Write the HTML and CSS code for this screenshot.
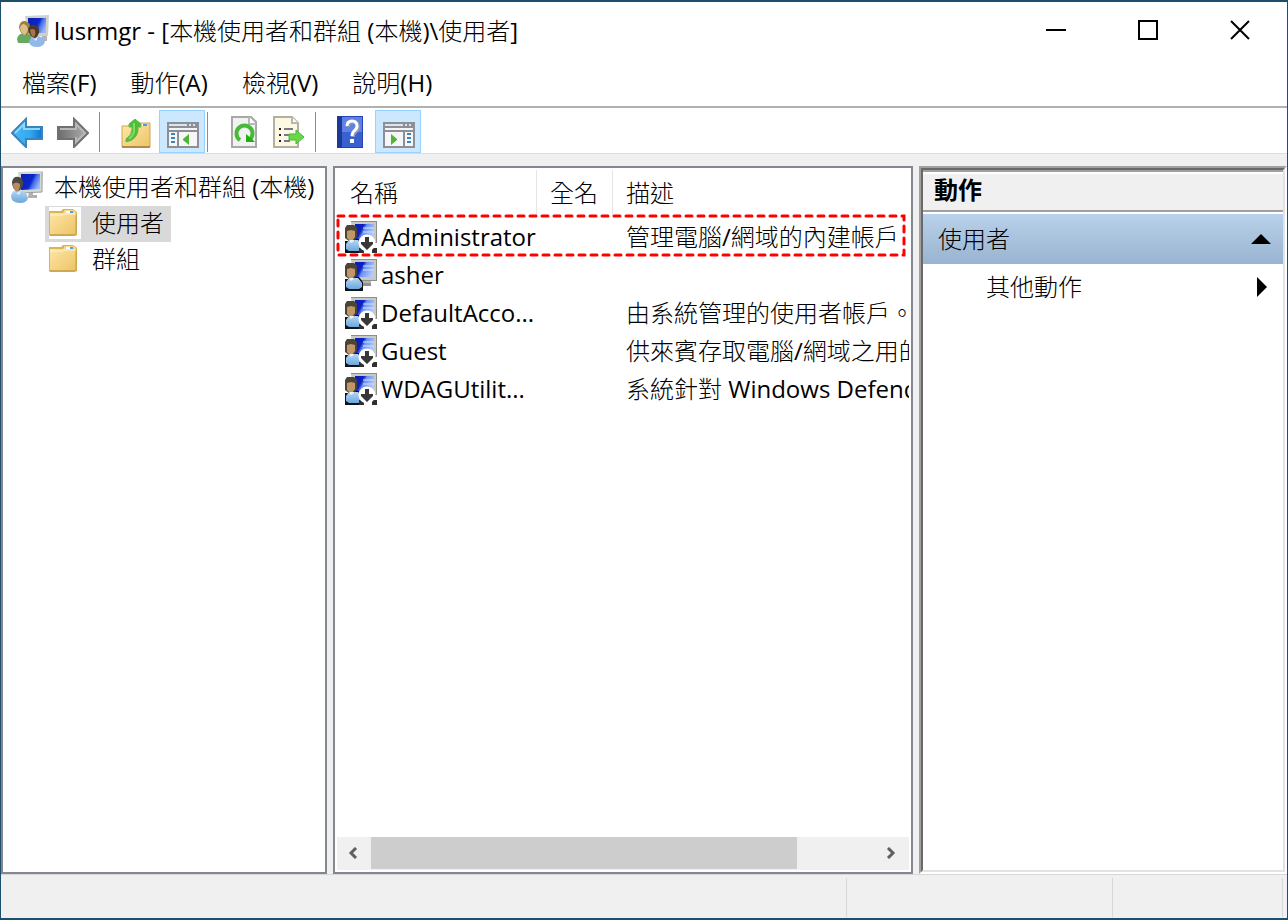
FILE: index.html
```html
<!DOCTYPE html>
<html lang="zh-Hant">
<head>
    <meta charset="UTF-8">
    <title>lusrmgr</title>
    <link rel="stylesheet" href="styles.css">
</head>
<body>
<!-- icons -->
<svg class="defs" aria-hidden="true">
    <defs>
        <linearGradient id="g-screen" x1="0" y1="0.2" x2="1" y2="0.6">
            <stop offset="0" stop-color="#0a1fb4"/>
            <stop offset="0.35" stop-color="#0c22c4"/>
            <stop offset="0.5" stop-color="#6c92f4"/>
            <stop offset="1" stop-color="#b4ccfc"/>
        </linearGradient>
        <linearGradient id="g-screen-dark" x1="0" y1="0.2" x2="1" y2="0.6">
            <stop offset="0" stop-color="#0a1fb4"/>
            <stop offset="0.55" stop-color="#0c28cc"/>
            <stop offset="0.7" stop-color="#4870e8"/>
            <stop offset="1" stop-color="#9cb8f8"/>
        </linearGradient>
        <linearGradient id="g-body" x1="0" y1="0" x2="0" y2="1">
            <stop offset="0" stop-color="#b4d8f6"/>
            <stop offset="1" stop-color="#6ca6dc"/>
        </linearGradient>
        <linearGradient id="g-folder" x1="0" y1="0" x2="1" y2="1">
            <stop offset="0" stop-color="#ffe8a8"/>
            <stop offset="1" stop-color="#ecc468"/>
        </linearGradient>
        <linearGradient id="g-blue" x1="0" y1="0" x2="1" y2="0">
            <stop offset="0" stop-color="#48b8f8"/>
            <stop offset="0.6" stop-color="#34a8f0"/>
            <stop offset="1" stop-color="#1474cc"/>
        </linearGradient>
        <linearGradient id="g-gray" x1="0" y1="0" x2="1" y2="0">
            <stop offset="0" stop-color="#6c6c6c"/>
            <stop offset="1" stop-color="#b0b0b0"/>
        </linearGradient>
    </defs>
    <symbol id="i-user" viewBox="0 0 32 32">
        <path d="M18 22h8v3h-8z" fill="#b4b4b4"/>
        <path d="M18 24h8v3h-8z" fill="#909090"/>
        <path d="M6 0h26v22H8z" fill="#c8c9c2"/>
        <path d="M6 0h26v1H6zM31 0h1v22h-1zM10 21h22v1H10z" fill="#8c8e88"/>
        <path d="M10 3h19v15H10z" fill="url(#g-screen)"/>
        <path d="M18 7h11M18 11h11" stroke="#d4e2ff"/>
        <path d="M0 20h4v-2h10l4 5v9H0z" fill="#101418"/>
        <path d="M1 23l3-4h9l4 5v4l-3 2H4l-3-2z" fill="url(#g-body)"/>
        <path d="M0 7l2-3h7l3 3v9l-3 4H4l-4-3z" fill="#4c4438"/>
        <path d="M2 10l4-1 4 1v6l-3 4h-2l-3-3z" fill="#c09868"/>
        <path d="M4 19l2 3 4-3z" fill="#f0f4f8"/>
    </symbol>
    <symbol id="i-disabled" viewBox="0 0 32 32">
        <use href="#i-user"/>
        <path d="M27 27h5v5h-5zM14 27h5v5h-5z" fill="#303030"/>
        <circle cx="22" cy="22" r="8.5" fill="#fff"/>
        <path d="M20 16h4v5h4v2l-6 6-6-6v-2h4z" fill="#383838"/>
    </symbol>
    <symbol id="i-root" viewBox="0 0 32 32">
        <path d="M18 20h4v4h4v3h-9z" fill="#b0b0b0"/>
        <path d="M7 1l25-1-1 21-22 1z" fill="#d4d6d2"/>
        <path d="M31 1v20l-20 1" fill="none" stroke="#9ca09c"/>
        <path d="M10 3h19v15l-19 1z" fill="url(#g-screen-dark)"/>
        <path d="M0 25q1-6 7-6 8 0 10 8-1 5-8 5-9 0-9-7z" fill="url(#g-body)"/>
        <path d="M1 11q1-6 7-5 5 1 4 8-2 6-6 6-5-2-5-9z" fill="#4c4844"/>
        <path d="M2 13q3-3 7 0 0 6-3 8-4-2-4-8z" fill="#b88c60"/>
        <path d="M3 20l3 2 4-2-2 4z" fill="#e4f0fa"/>
    </symbol>
    <symbol id="i-app" viewBox="0 0 32 32">
        <path d="M8 1l24-1-1 21-20 1z" fill="#d0d2ca"/>
        <path d="M11 3h18v15H11z" fill="url(#g-screen-dark)"/>
        <path d="M25 21h5v5h-5z" fill="#b4b4b4"/>
        <path d="M0 24q1-6 8-6 7 1 7 6l-1 4H1z" fill="#68a860"/>
        <path d="M2 12q1-7 6-6 6 1 5 8-1 6-5 6-5-1-6-8z" fill="#a08040"/>
        <path d="M3 13q1-4 4-4 4 2 4 6-2 5-4 5-3-2-4-7z" fill="#dcc08c"/>
        <path d="M12 27q1-6 8-6 7 1 8 6-2 5-8 5-7 0-8-5z" fill="#90b8e8"/>
        <path d="M11 14q2-5 7-4 5 2 4 8-2 5-5 5-5-2-6-9z" fill="#4c3828"/>
        <path d="M13 15q2-2 5 0 1 5-1 7-3 0-4-7z" fill="#a8744c"/>
        <path d="M15 22l3 2 3-2-2 4z" fill="#eef4fa"/>
    </symbol>
    <symbol id="i-folder" viewBox="0 0 32 32">
        <path d="M0 0h32v32H0z" fill="#fff"/>
        <path d="M0 4h12l2-2h10l4 3v23l-2 1H1l-1-1z" fill="#dcb458"/>
        <path d="M1 6h13l2-3h8l3 2v22H1z" fill="url(#g-folder)"/>
        <path d="M17 4h5v2h-5z" fill="#fff"/>
        <path d="M21 4h3v2h-3z" fill="#5c9ce0"/>
        <path d="M1 8h13l2-1h10" fill="none" stroke="#fff4d0"/>
        <path d="M1 28h25M27 8v20" stroke="#c49c48"/>
    </symbol>
    <symbol id="i-back" viewBox="0 0 32 32">
        <path d="M1 17L15 3v8h16v12H15v8z" fill="url(#g-blue)" stroke="#3c84b8" stroke-width="2"/>
        <path d="M4 17l9-9v5h16" fill="none" stroke="#8cd8fc" stroke-width="2"/>
    </symbol>
    <symbol id="i-forward" viewBox="0 0 32 32">
        <path d="M31 17L17 3v8H1v12h16v8z" fill="url(#g-gray)" stroke="#707070" stroke-width="2"/>
        <path d="M3 13h16V8l9 9-9 9v-5" fill="none" stroke="#b8b8b8" stroke-width="2"/>
    </symbol>
    <symbol id="i-up" viewBox="0 0 32 32">
        <path d="M1 10h14l3-3h11v24H1z" fill="url(#g-folder)" stroke="#d0a450"/>
        <path d="M1 31h28" stroke="#b08c44" stroke-width="2"/>
        <path d="M17 8h9v2h-9z" fill="#fff"/>
        <path d="M22 8h4v2h-4z" fill="#4c98e4"/>
        <path d="M14 3l6 5v3h-3v4q-1 6-6 9l-6 2v-3q6-4 6-9v-3H8V8z" fill="#4cc034" stroke="#70b450"/>
        <path d="M13 7v9q-1 4-5 7" fill="none" stroke="#7cdc60" stroke-width="2"/>
    </symbol>
    <symbol id="i-tree-pane" viewBox="0 0 32 32">
        <path d="M0 6h32v26H0z" fill="#8c8f98"/>
        <path d="M2 8h18v2H2zM22 8h2v2h-2zM26 8h2v2h-2z" fill="#dce4ec"/>
        <path d="M2 12h28v2H2z" fill="#f4f4f4"/>
        <path d="M2 16h8v14H2zM12 16h18v14H12z" fill="#f6f6f6"/>
        <path d="M4 18h4M4 22h4M4 26h4" stroke="#3c84c0" stroke-width="2"/>
        <path d="M22 18v11l-6-5v-1z" fill="#50b434"/>
    </symbol>
    <symbol id="i-action-pane" viewBox="0 0 32 32">
        <path d="M0 6h32v26H0z" fill="#8c8f98"/>
        <path d="M2 8h18v2H2zM22 8h2v2h-2zM26 8h2v2h-2z" fill="#dce4ec"/>
        <path d="M2 12h28v2H2z" fill="#f4f4f4"/>
        <path d="M2 16h18v14H2zM22 16h8v14h-8z" fill="#f6f6f6"/>
        <path d="M24 18h4M24 22h4M24 26h4" stroke="#3c84c0" stroke-width="2"/>
        <path d="M8 18v11l6-5v-1z" fill="#50b434"/>
    </symbol>
    <symbol id="i-refresh" viewBox="0 0 32 32">
        <path d="M5 1h19l5 5v25H5z" fill="#f2f2f2" stroke="#a8a8a4" stroke-width="2"/>
        <path d="M22 1v7h7" fill="#fff" stroke="#b8b8b8" stroke-width="2"/>
        <path d="M13 24a8 8 0 1 1 9 0" fill="none" stroke="#48b838" stroke-width="4"/>
        <path d="M19 18v8h9l-3-3z" fill="#20b010"/>
    </symbol>
    <symbol id="i-export" viewBox="0 0 32 32">
        <path d="M1 1h18l6 6v24H1z" fill="#fcf8e4" stroke="#b4b0a0" stroke-width="2"/>
        <path d="M19 1v6h6" fill="#fff" stroke="#b8b8b8" stroke-width="2"/>
        <path d="M6 13h2M6 19h2M6 25h2" stroke="#202030" stroke-width="2"/>
        <path d="M11 13h9M11 19h6M11 25h6" stroke="#787888" stroke-width="2"/>
        <path d="M16 18h7v-4l8 7-8 7v-4h-7z" fill="#68d848" stroke="#48b838"/>
    </symbol>
    <symbol id="i-help" viewBox="0 0 32 32">
        <path d="M0 0h26v32H0z" fill="#2444b0"/>
        <path d="M5 1h20v30H5z" fill="#6080e8"/>
        <path d="M5 16h20v15H5z" fill="#3860d0"/>
        <path d="M0 0h5v32H0z" fill="#1c3898"/>
        <path d="M11 11q0-5 5-5t5 5q0 3-3 5-2 2-2 5" fill="none" stroke="#8c98b8" stroke-width="4"/>
        <path d="M10 10q0-5 5-5t5 5q0 3-3 5-2 2-2 5" fill="none" stroke="#fff" stroke-width="3"/>
        <path d="M13 23h4v4h-4z" fill="#fff"/>
    </symbol>
</svg>

<div class="window">
    <div class="title-bar">
        <svg class="icon"><use href="#i-app"/></svg>
        <h1>lusrmgr - [本機使用者和群組 (本機)\使用者]</h1>
        <div class="window-buttons">
            <button aria-label="最小化"><svg viewBox="0 0 20 20"><path d="M0 10h20"/></svg></button>
            <button aria-label="最大化"><svg viewBox="0 0 20 20"><path d="M1 1h18v18H1z"/></svg></button>
            <button aria-label="關閉"><svg viewBox="0 0 20 20"><path d="M1 1l18 18M19 1L1 19"/></svg></button>
        </div>
    </div>

    <div class="menu-bar">
        <button>檔案(F)</button>
        <button>動作(A)</button>
        <button>檢視(V)</button>
        <button>說明(H)</button>
    </div>

    <div class="tool-bar">
        <button class="tool" aria-label="上一頁"><svg class="icon"><use href="#i-back"/></svg></button>
        <button class="tool" aria-label="下一頁"><svg class="icon"><use href="#i-forward"/></svg></button>
        <span class="separator"></span>
        <button class="tool" aria-label="上移一層"><svg class="icon"><use href="#i-up"/></svg></button>
        <button class="tool pressed" aria-label="主控台樹狀目錄"><svg class="icon"><use href="#i-tree-pane"/></svg></button>
        <span class="separator"></span>
        <button class="tool" aria-label="重新整理"><svg class="icon"><use href="#i-refresh"/></svg></button>
        <button class="tool" aria-label="匯出清單"><svg class="icon"><use href="#i-export"/></svg></button>
        <span class="separator"></span>
        <button class="tool" aria-label="說明"><svg class="icon"><use href="#i-help"/></svg></button>
        <button class="tool pressed" aria-label="動作窗格"><svg class="icon"><use href="#i-action-pane"/></svg></button>
    </div>

    <div class="main">
        <ul class="tree">
            <li><svg class="icon"><use href="#i-root"/></svg>本機使用者和群組 (本機)</li>
            <li class="child selected"><svg class="icon"><use href="#i-folder"/></svg>使用者</li>
            <li class="child"><svg class="icon"><use href="#i-folder"/></svg>群組</li>
        </ul>

        <div class="list">
            <table>
                <thead>
                <tr><th class="col-name">名稱</th><th class="col-full">全名</th><th>描述</th></tr>
                </thead>
                <tbody>
                <tr>
                    <td><div class="name"><svg class="icon"><use href="#i-disabled"/></svg>Administrator</div></td>
                    <td></td>
                    <td>管理電腦/網域的內建帳戶</td>
                </tr>
                <tr>
                    <td><div class="name"><svg class="icon"><use href="#i-user"/></svg>asher</div></td>
                    <td></td>
                    <td></td>
                </tr>
                <tr>
                    <td><div class="name"><svg class="icon"><use href="#i-disabled"/></svg>DefaultAcco...</div></td>
                    <td></td>
                    <td>由系統管理的使用者帳戶。</td>
                </tr>
                <tr>
                    <td><div class="name"><svg class="icon"><use href="#i-disabled"/></svg>Guest</div></td>
                    <td></td>
                    <td>供來賓存取電腦/網域之用的</td>
                </tr>
                <tr>
                    <td><div class="name"><svg class="icon"><use href="#i-disabled"/></svg>WDAGUtilit...</div></td>
                    <td></td>
                    <td>系統針對 Windows Defend</td>
                </tr>
                </tbody>
            </table>
            <svg class="marker"><rect width="100%" height="100%"/></svg>
            <div class="scroll-bar">
                <button aria-label="向左捲動"><svg viewBox="0 0 10 12"><path d="M8 1L3 6l5 5"/></svg></button>
                <div class="track"><div class="thumb"></div></div>
                <button aria-label="向右捲動"><svg viewBox="0 0 10 12"><path d="M2 1l5 5-5 5"/></svg></button>
            </div>
        </div>

        <div class="actions">
            <div class="actions-inner">
                <h2>動作</h2>
                <button class="section">使用者<svg viewBox="0 0 20 20"><path d="M0 15l10-10 10 10z"/></svg></button>
                <button class="more">其他動作<svg viewBox="0 0 20 20"><path d="M6 0l10 10-10 10z"/></svg></button>
            </div>
        </div>
    </div>

    <div class="status-bar">
        <span></span>
        <span></span>
        <span></span>
    </div>
</div>
</body>
</html>
```
FILE: styles.css
```css
*{
    margin: 0;
    padding: 0;
    box-sizing: border-box;
}
body, button{
    font-family: "Open Sans", "Noto Sans CJK TC Light", "Noto Sans CJK TC", sans-serif;
    font-size: 24px;
    line-height: 36px;
    color: #000;
}
button{
    border: none;
    background: none;
    white-space: nowrap;
}
svg{
    display: block;
    flex: none;
}
.defs{
    position: absolute;
    width: 0;
    height: 0;
}
.icon{
    width: 32px;
    height: 32px;
}
.window{
    display: flex;
    flex-direction: column;
    min-height: 100vh;
    border: 1px solid #1b4f6c;
    border-width: 2px 1px;
    background: #f0f0f0;
}

/* title */
.title-bar{
    display: flex;
    align-items: center;
    height: 58px;
    padding-left: 16px;
    background: #fff;
}
.title-bar h1{
    flex: 1;
    padding-left: 5px;
    font-size: 24px;
    font-weight: 400;
}
.window-buttons{
    display: flex;
    padding-right: 1px;
}
.window-buttons button{
    display: flex;
    align-items: center;
    justify-content: center;
    width: 92px;
    height: 58px;
    padding-bottom: 2px;
}
.window-buttons svg{
    width: 20px;
    height: 20px;
    fill: none;
    stroke: #000;
    stroke-width: 2;
}

/* menu */
.menu-bar{
    display: flex;
    gap: 34px;
    height: 48px;
    padding: 5px 21px;
    background: #fff;
    border-bottom: 2px solid #b0b0b0;
}

/* toolbar */
.tool-bar{
    display: flex;
    height: 46px;
    padding: 2px 2px 0;
    background: #fff;
    border-bottom: 1px solid #dcdcdc;
}
.tool{
    display: flex;
    align-items: flex-start;
    width: 46px;
    height: 43px;
    padding: 6px 0 0 8px;
}
.tool.pressed{
    padding: 5px 0 0 7px;
    background: #cce8ff;
    border: 1px solid #99d1ff;
}
.separator{
    width: 1px;
    height: 40px;
    margin: 2px 13px 0 4px;
    background: #8c8c8c;
}
.pressed + .separator{
    margin: 2px 11px 0 2px;
}

/* panes */
.main{
    flex: 1;
    display: grid;
    grid-template-columns: 326px minmax(0, 1fr) 368px;
    gap: 6px;
    padding-top: 12px;
}
.tree, .list{
    background: #fff;
    border: 2px solid #828790;
}
.tree{
    padding: 2px 0 0 8px;
    list-style: none;
}
.tree li{
    display: flex;
    align-items: center;
    gap: 11px;
    width: max-content;
    height: 36px;
    padding-bottom: 2px;
}
.tree .child{
    margin-left: 34px;
    padding: 0 7px 2px 4px;
}
.tree .selected{
    background: #d9d9d9;
}

.list{
    position: relative;
    display: flex;
    flex-direction: column;
    justify-content: space-between;
    padding: 0 2px 2px;
}
table{
    width: 100%;
    table-layout: fixed;
    border-collapse: collapse;
}
th{
    height: 50px;
    padding-left: 13px;
    font-weight: 400;
    text-align: left;
    background: linear-gradient(#e5e5e5, #e5e5e5) right 2px / 1px 46px no-repeat;
}
th:last-child{
    background: none;
}
.col-name{
    width: 200px;
}
.col-full{
    width: 76px;
}
td{
    height: 38px;
    overflow: hidden;
    white-space: nowrap;
}
td:last-child{
    padding-left: 13px;
}
.name{
    display: flex;
    align-items: center;
    gap: 4px;
    padding-left: 8px;
}
/* red frame over the first row */
.marker{
    position: absolute;
    top: 48px;
    left: 3px;
    width: calc(100% - 10px);
    height: 39px;
    overflow: visible;
}
.marker rect{
    fill: none;
    stroke: #fe0000;
    stroke-width: 3;
    stroke-linecap: round;
    stroke-dasharray: 6 6;
}
.scroll-bar{
    display: flex;
    height: 33px;
    background: #f0f0f0;
}
.scroll-bar button{
    display: flex;
    align-items: center;
    justify-content: center;
    width: 34px;
    padding: 0 2px 2px 0;
}
.scroll-bar svg{
    width: 10px;
    height: 12px;
    fill: none;
    stroke: #606060;
    stroke-width: 3;
}
.track{
    flex: 1;
}
.thumb{
    width: 426px;
    height: 32px;
    background: #cdcdcd;
}

/* actions */
.actions{
    display: flex;
    border: 2px solid;
    border-color: #a0a0a0 #fff #fff #a0a0a0;
}
.actions-inner{
    flex: 1;
    background: #fff;
    border: 2px solid;
    border-color: #696969 #e3e3e3 #e3e3e3 #696969;
}
.actions h2{
    height: 42px;
    padding-left: 11px;
    font-family: "Open Sans", "Noto Sans CJK TC", sans-serif;
    font-size: 24px;
    line-height: 36px;
    background: #f0f0f0;
    border-top: 2px solid #a0a0a0;
    border-bottom: 2px solid #a0a0a0;
    box-shadow: inset 0 2px #fff;
}
.section, .more{
    display: flex;
    align-items: center;
    justify-content: space-between;
    width: 100%;
    padding-right: 12px;
}
.section{
    height: 50px;
    margin-top: 2px;
    padding-left: 15px;
    background: linear-gradient(#b9d1ea, #99b4d1);
}
.more{
    height: 46px;
    padding-left: 63px;
}
.actions svg{
    width: 20px;
    height: 20px;
}

/* status */
.status-bar{
    display: grid;
    grid-template-columns: 1fr 266px 170px;
    height: 44px;
    padding: 3px 4px 1px 0;
    border-top: 1px solid #d7d7d7;
}
.status-bar span{
    border-right: 1px solid #d7d7d7;
}
```
